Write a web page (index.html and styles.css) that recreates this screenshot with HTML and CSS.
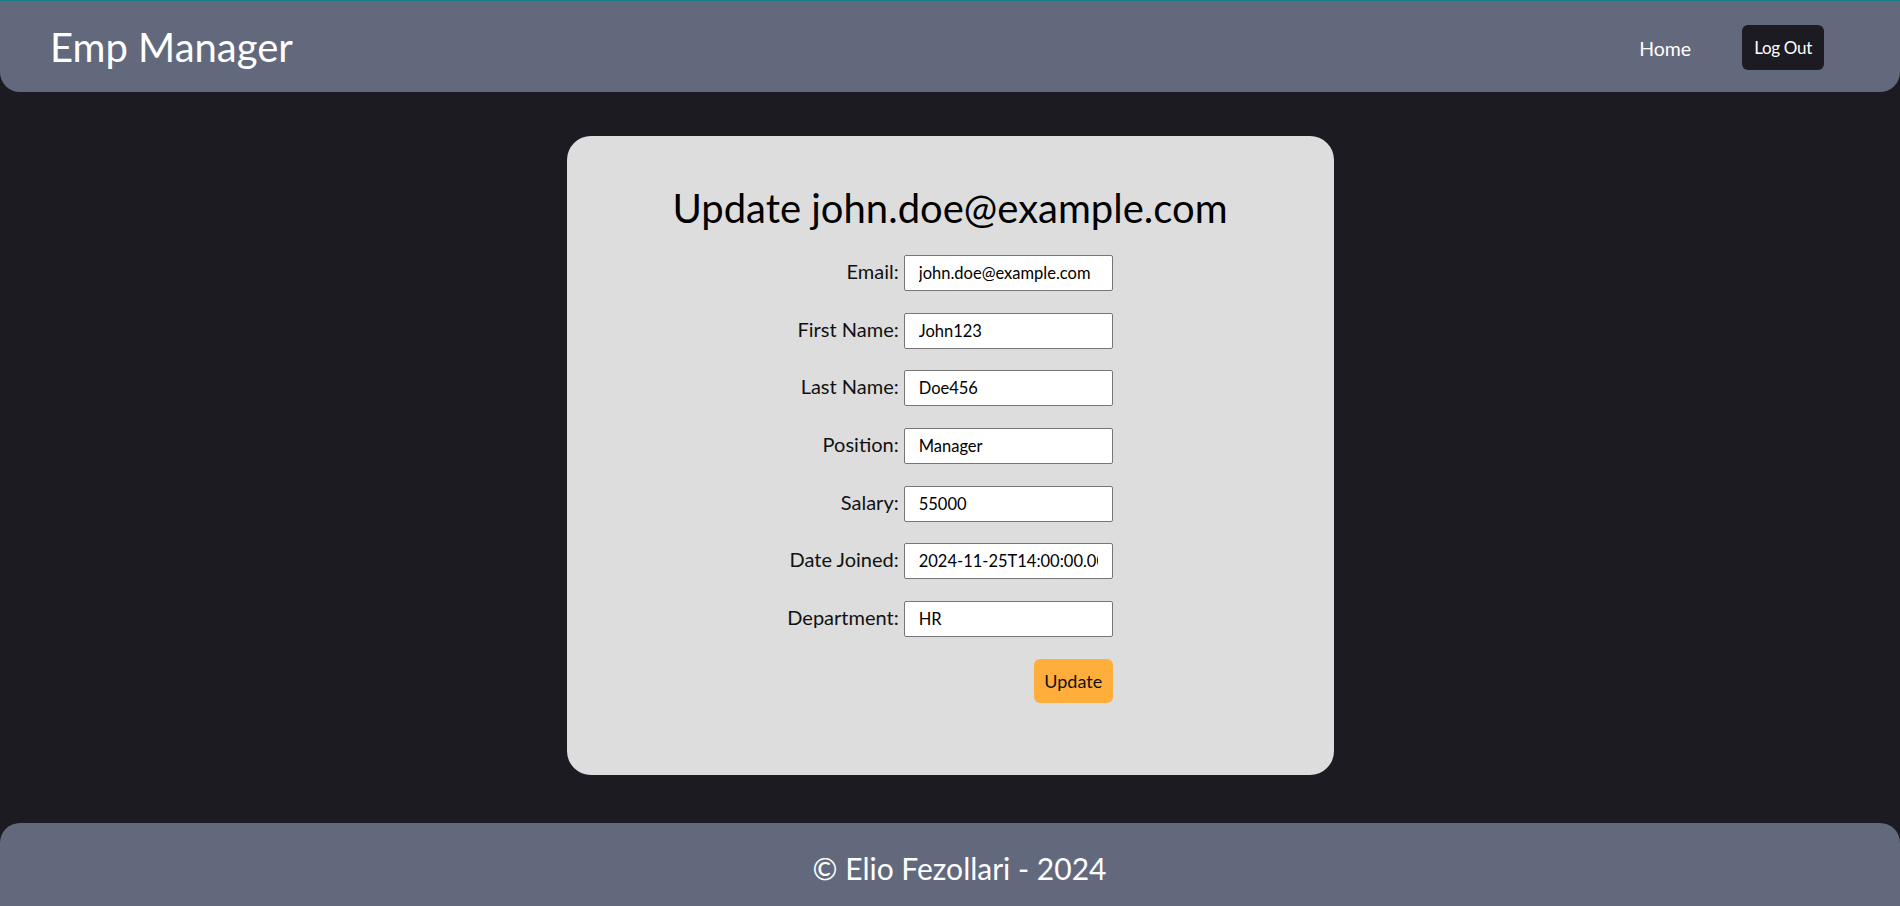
FILE: index.html
```html
<!DOCTYPE html>
<html lang="en">
<head>
<meta charset="utf-8">
<title>Emp Manager</title>
<link rel="stylesheet" href="styles.css">
</head>
<body>
<header class="topbar">
  <div class="brand">Emp Manager</div>
  <nav class="nav">
    <a class="nav-link" href="#">Home</a>
    <button class="logout" type="button">Log Out</button>
  </nav>
</header>
<main class="main">
  <section class="card">
    <h1 class="card-title">Update john.doe@example.com</h1>
    <form class="form">
      <label class="label" for="email">Email:</label>
      <input class="field" id="email" type="text" value="john.doe@example.com">
      <label class="label" for="first">First Name:</label>
      <input class="field" id="first" type="text" value="John123">
      <label class="label" for="last">Last Name:</label>
      <input class="field" id="last" type="text" value="Doe456">
      <label class="label" for="pos">Position:</label>
      <input class="field" id="pos" type="text" value="Manager">
      <label class="label" for="sal">Salary:</label>
      <input class="field" id="sal" type="text" value="55000">
      <label class="label" for="date">Date Joined:</label>
      <input class="field" id="date" type="text" value="2024-11-25T14:00:00.000Z">
      <label class="label" for="dept">Department:</label>
      <input class="field" id="dept" type="text" value="HR">
      <div class="actions">
        <button class="submit" type="button">Update</button>
      </div>
    </form>
  </section>
</main>
<footer class="footer">© Elio Fezollari - 2024</footer>
</body>
</html>
```
FILE: styles.css
```css
* { box-sizing: border-box; }
html, body { height: 100%; }
body {
  margin: 0;
  background: #1c1b21;
  font-family: Lato, "Noto Sans", sans-serif;
  display: flex;
  flex-direction: column;
  min-height: 100vh;
  overflow: hidden;
}
.topbar {
  height: 92px;
  flex: none;
  background: #63697d;
  border-top: 1px solid #137f86;
  border-radius: 0 0 20px 20px;
  display: flex;
  align-items: center;
  justify-content: space-between;
  padding: 0 76px 0 50px;
}
.brand {
  color: #fff;
  font-size: 40px;
  line-height: 1.2;
  margin-top: 1px;
}
.nav {
  display: flex;
  align-items: center;
  gap: 51px;
}
.nav-link {
  color: #fff;
  text-decoration: none;
  font-size: 19.5px;
  padding-top: 3px;
}
.logout {
  background: #1c1b21;
  color: #fff;
  border: none;
  border-radius: 6px;
  font-family: inherit;
  font-size: 17px;
  letter-spacing: -0.3px;
  height: 45px;
  padding: 0 12px;
  margin-top: 1px;
}
.main {
  flex: 1;
  display: flex;
  justify-content: center;
  align-items: flex-start;
  padding-top: 44px;
}
.card {
  width: 767px;
  background: #dddddd;
  border-radius: 24px;
  padding: 48px 0 72px;
  display: flex;
  flex-direction: column;
  align-items: center;
}
.card-title {
  margin: 0 0 23px;
  font-weight: 400;
  font-size: 40px;
  line-height: 1.2;
  color: #000;
}
.form {
  display: grid;
  grid-template-columns: auto 209px;
  column-gap: 5px;
  row-gap: 21.7px;
  align-items: center;
}
.label {
  justify-self: end;
  font-size: 20px;
  color: #111;
  margin-top: -4px;
}
.field {
  width: 209px;
  height: 36px;
  border: 1px solid #767676;
  border-radius: 2px;
  background: #fff;
  padding: 0 14px;
  font-family: inherit;
  font-size: 16.5px;
  color: #000;
}
.actions {
  grid-column: 2;
  display: flex;
  justify-content: flex-end;
  margin-top: 0;
}
.submit {
  background: #ffae3c;
  color: #111;
  border: none;
  border-radius: 6px;
  height: 44px;
  width: 79px;
  font-family: inherit;
  font-size: 18px;
}
.footer {
  flex: none;
  height: 83px;
  background: #63697d;
  border-radius: 20px 20px 0 0;
  color: #fff;
  font-size: 30px;
  line-height: 36px;
  text-align: center;
  padding: 27px 0 0 19px;
}
```
